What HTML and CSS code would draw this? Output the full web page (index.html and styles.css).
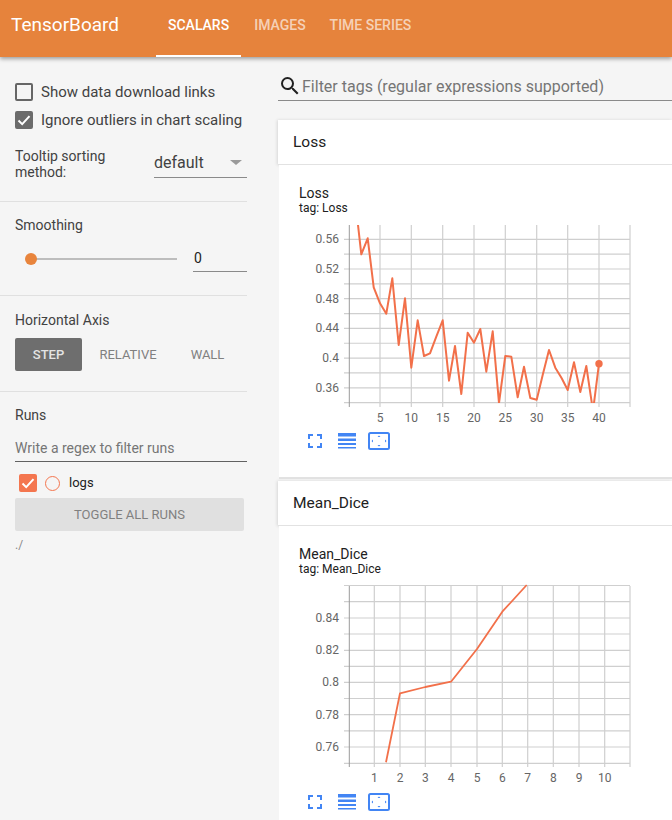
FILE: index.html
```html
<!DOCTYPE html>
<html lang="en">
<head>
    <meta charset="UTF-8">
    <meta name="viewport" content="width=device-width, initial-scale=1.0">
    <title>TensorBoard</title>
    <link rel="stylesheet" href="styles.css">
</head>
<body>

    <header class="topbar">
        <div class="brand">TensorBoard</div>
        <nav class="tabs">
            <a class="tab active">SCALARS</a>
            <a class="tab">IMAGES</a>
            <a class="tab">TIME SERIES</a>
        </nav>
    </header>

    <div class="page">
        <aside class="sidebar">
            <section class="side-section options">
                <label class="check-row">
                    <span class="box"></span>
                    <span>Show data download links</span>
                </label>
                <label class="check-row">
                    <span class="box checked">
                        <svg viewBox="0 0 18 18" width="18" height="18"><path d="M3.5 9.5l3.7 3.6 7.3-8" class="tick"/></svg>
                    </span>
                    <span>Ignore outliers in chart scaling</span>
                </label>
                <div class="sort-row">
                    <div class="sort-label">Tooltip sorting method:</div>
                    <div class="select">
                        <span>default</span>
                        <span class="caret"></span>
                    </div>
                </div>
            </section>

            <section class="side-section smoothing">
                <div class="side-title">Smoothing</div>
                <div class="slider-row">
                    <div class="slider"><span class="knob"></span></div>
                    <div class="slider-value">0</div>
                </div>
            </section>

            <section class="side-section axis">
                <div class="side-title">Horizontal Axis</div>
                <div class="axis-buttons">
                    <span class="axis-btn selected">STEP</span>
                    <span class="axis-btn">RELATIVE</span>
                    <span class="axis-btn">WALL</span>
                </div>
            </section>

            <section class="side-section runs">
                <div class="side-title">Runs</div>
                <div class="runs-filter">Write a regex to filter runs</div>
                <div class="run-row">
                    <span class="box run-box">
                        <svg viewBox="0 0 18 18" width="18" height="18"><path d="M3.5 9.5l3.7 3.6 7.3-8" class="tick"/></svg>
                    </span>
                    <span class="run-dot"></span>
                    <span class="run-name">logs</span>
                </div>
                <div class="toggle-runs">TOGGLE ALL RUNS</div>
                <div class="run-dir">./</div>
            </section>
        </aside>

        <main class="content">
            <div class="tag-filter">
                <svg class="search-icon" viewBox="0 0 24 24" width="24" height="24"><path d="M15.5 14h-.79l-.28-.27A6.47 6.47 0 0 0 16 9.5 6.5 6.5 0 1 0 9.5 16c1.61 0 3.09-.59 4.23-1.57l.27.28v.79l5 4.99L20.49 19l-4.99-5zm-6 0C7.01 14 5 11.99 5 9.5S7.01 5 9.5 5 14 7.01 14 9.5 11.99 14 9.5 14z"/></svg>
                <span>Filter tags (regular expressions supported)</span>
            </div>

            <section class="card">
                <h3 class="card-head">Loss</h3>
                <div class="card-body">
                    <div class="chart-title">Loss</div>
                    <div class="chart-tag">tag: Loss</div>
                    <svg class="chart" viewBox="299 220 335 205" width="335" height="205">
                        <path class="grid" d="M344 239.3H630M344 254.15H630M344 269H630M344 283.85H630M344 298.7H630M344 313.55H630M344 328.4H630M344 343.25H630M344 358.1H630M344 372.95H630M344 387.8H630M344 402.65H630"/>
                        <path class="grid" d="M380 225V407M411.3 225V407M442.7 225V407M474 225V407M505.3 225V407M536.7 225V407M567.7 225V407M599 225V407M630 225V407"/>
                        <path class="axis-line" d="M349.3 225V407"/>
                        <g class="y-labels">
                            <text x="339" y="243.3">0.56</text>
                            <text x="339" y="273">0.52</text>
                            <text x="339" y="302.7">0.48</text>
                            <text x="339" y="332.4">0.44</text>
                            <text x="339" y="362.1">0.4</text>
                            <text x="339" y="391.8">0.36</text>
                        </g>
                        <g class="x-labels">
                            <text x="380" y="422">5</text>
                            <text x="411.3" y="422">10</text>
                            <text x="442.7" y="422">15</text>
                            <text x="474" y="422">20</text>
                            <text x="505.3" y="422">25</text>
                            <text x="536.7" y="422">30</text>
                            <text x="567.7" y="422">35</text>
                            <text x="599" y="422">40</text>
                        </g>
                        <clipPath id="lossClip"><rect x="349" y="225" width="281" height="178"/></clipPath>
                        <polyline class="series" clip-path="url(#lossClip)" points="358,225 361.3,254.3 367.7,238.3 373.7,287.3 380,303.3 386.3,313.7 392.3,278.3 398.7,345 405,298.3 411.3,367.7 417.7,320.3 424,356 430,353.3 436.3,336.7 442.7,320.3 449,380.7 455,346 461.3,394 467.7,332.7 474,342.7 480.3,329 486.3,371.7 492.7,331.3 499,403 505.3,356 511.3,356.7 517.7,397.3 524,366.7 530.3,398 536.7,399.7 542.7,375 549,350 555.3,367.7 561.7,378.3 567.7,390 574,362.3 580.3,392 586.3,366 593,411 599,363.7"/>
                        <circle class="series-dot" cx="599" cy="363.7" r="3.7"/>
                    </svg>
                    <div class="chart-tools">
                        <svg class="tool-fit" viewBox="0 0 14 14" width="14" height="14"><path class="tool-fill" d="M0 0h5v2H2v3H0zM9 0h5v5h-2V2H9zM0 9h2v3h3v2H0zM12 9h2v5H9v-2h3z"/></svg>
                        <svg class="tool-lines" viewBox="0 0 18 16" width="18" height="16"><path class="tool-fill" d="M0 0h18v3.500H0zM0 5.500h18v2.500H0zM0 10h18v2H0zM0 14h18v1.500H0z"/></svg>
                        <svg class="tool-box" viewBox="0 0 22 18" width="22" height="18"><rect class="tool-stroke" x="1" y="1" width="20" height="16" rx="1.500"/><path class="tool-fill" d="M9.500 5L11 3.500 12.500 5zM9.500 13l1.500 1.500 1.500-1.500zM5 7.500L3.500 9 5 10.500zM17 7.500L18.500 9 17 10.500z"/></svg>
                    </div>
                </div>
            </section>

            <section class="card">
                <h3 class="card-head">Mean_Dice</h3>
                <div class="card-body">
                    <div class="chart-title">Mean_Dice</div>
                    <div class="chart-tag">tag: Mean_Dice</div>
                    <svg class="chart" viewBox="299 581 335 205" width="335" height="205">
                        <path class="grid" d="M344 585.5H630M344 601.7H630M344 618H630M344 634H630M344 650.3H630M344 666.3H630M344 682.3H630M344 698.5H630M344 714.7H630M344 730.8H630M344 747H630M344 763.3H630"/>
                        <path class="grid" d="M374.3 586V767M400 586V767M425.3 586V767M451 586V767M477 586V767M502.3 586V767M527.7 586V767M553.3 586V767M579 586V767M604.7 586V767M630 586V767"/>
                        <path class="axis-line" d="M349.3 586V767"/>
                        <g class="y-labels">
                            <text x="339" y="622">0.84</text>
                            <text x="339" y="654.3">0.82</text>
                            <text x="339" y="686.3">0.8</text>
                            <text x="339" y="718.7">0.78</text>
                            <text x="339" y="751">0.76</text>
                        </g>
                        <g class="x-labels">
                            <text x="374.3" y="782">1</text>
                            <text x="400" y="782">2</text>
                            <text x="425.3" y="782">3</text>
                            <text x="451" y="782">4</text>
                            <text x="477" y="782">5</text>
                            <text x="502.3" y="782">6</text>
                            <text x="527.7" y="782">7</text>
                            <text x="553.3" y="782">8</text>
                            <text x="579" y="782">9</text>
                            <text x="604.7" y="782">10</text>
                        </g>
                        <polyline class="series thin" points="386,762.3 400,693.3 425.3,687 451,681.7 477,649 502.3,611.7 526.7,585"/>
                    </svg>
                    <div class="chart-tools">
                        <svg class="tool-fit" viewBox="0 0 14 14" width="14" height="14"><path class="tool-fill" d="M0 0h5v2H2v3H0zM9 0h5v5h-2V2H9zM0 9h2v3h3v2H0zM12 9h2v5H9v-2h3z"/></svg>
                        <svg class="tool-lines" viewBox="0 0 18 16" width="18" height="16"><path class="tool-fill" d="M0 0h18v3.500H0zM0 5.500h18v2.500H0zM0 10h18v2H0zM0 14h18v1.500H0z"/></svg>
                        <svg class="tool-box" viewBox="0 0 22 18" width="22" height="18"><rect class="tool-stroke" x="1" y="1" width="20" height="16" rx="1.500"/><path class="tool-fill" d="M9.500 5L11 3.500 12.500 5zM9.500 13l1.500 1.500 1.500-1.500zM5 7.500L3.500 9 5 10.500zM17 7.500L18.500 9 17 10.500z"/></svg>
                    </div>
                </div>
            </section>
        </main>
    </div>

</body>
</html>
```

FILE: styles.css
```css
html, body {
    height: 100%;
}
body {
    font-family: Roboto, "Liberation Sans", sans-serif;
    margin: 0;
    padding: 0;
    background-color: #f5f5f5;
    color: #424242;
    overflow: hidden;
}

/* top bar */
.topbar {
    display: flex;
    height: 57px;
    background-color: #e6833c;
    box-shadow: 0 2px 4px rgba(0, 0, 0, 0.35);
    position: relative;
    z-index: 2;
}
.brand {
    width: 145px;
    padding: 13px 0 0 11px;
    font-size: 19px;
    line-height: 24px;
    color: #fff;
}
.tabs {
    display: flex;
}
.tab {
    padding: 17px 12px 0;
    font-size: 14px;
    line-height: 16px;
    font-weight: 500;
    color: rgba(255, 255, 255, 0.65);
    box-sizing: border-box;
}
.tab + .tab {
    margin-left: 1px;
    margin-right: -1px;
}
.tab.active {
    color: #fff;
    border-bottom: 2px solid #fff;
}

.page {
    display: flex;
    align-items: flex-start;
}

/* sidebar */
.sidebar {
    flex: 0 0 247px;
    margin-right: 31px;
}
.side-section {
    padding-left: 15px;
    border-bottom: 1px solid #e0e0e0;
    box-sizing: border-box;
}
.options {
    height: 145px;
    padding-top: 26px;
}
.check-row {
    display: flex;
    align-items: center;
    gap: 8px;
    height: 18px;
    margin-bottom: 10px;
    font-size: 15px;
    color: #424242;
}
.box {
    flex: none;
    width: 18px;
    height: 18px;
    border: 2px solid #666;
    border-radius: 2px;
    box-sizing: border-box;
}
.box.checked {
    background-color: #6b6b6b;
    border-color: #6b6b6b;
}
.box svg {
    display: block;
    margin: -2px;
}
.tick {
    fill: none;
    stroke: #fff;
    stroke-width: 2;
}
.sort-row {
    display: flex;
    margin-top: 19px;
}
.sort-label {
    width: 139px;
    padding-right: 30px;
    font-size: 14px;
    line-height: 16px;
    box-sizing: border-box;
}
.select {
    display: flex;
    justify-content: space-between;
    align-items: center;
    flex: 1;
    height: 32px;
    margin-top: -2px;
    padding-top: 2px;
    font-size: 16px;
    border-bottom: 1px solid #8a8a8a;
    box-sizing: border-box;
}
.caret {
    margin-right: 5px;
    border-left: 6px solid transparent;
    border-right: 6px solid transparent;
    border-top: 5px solid #9a9a9a;
}
.side-title {
    font-size: 14px;
    line-height: 16px;
    color: #424242;
}
.smoothing {
    height: 94px;
    padding-top: 15px;
}
.slider-row {
    display: flex;
    align-items: flex-start;
    margin-top: 10px;
}
.slider {
    position: relative;
    width: 147px;
    height: 2px;
    margin: 15px 0 0 15px;
    background-color: #bdbdbd;
}
.knob {
    position: absolute;
    left: -5px;
    top: -5px;
    width: 12px;
    height: 12px;
    border-radius: 50%;
    background-color: #e8843c;
}
.slider-value {
    flex: 1;
    height: 29px;
    margin-left: 16px;
    padding: 7px 0 0 1px;
    font-size: 14px;
    line-height: 16px;
    color: #212121;
    border-bottom: 1px solid #8a8a8a;
    box-sizing: border-box;
}
.axis {
    height: 96px;
    padding-top: 16px;
}
.axis-buttons {
    display: flex;
    gap: 12.5px;
    margin-top: 10px;
}
.axis-btn {
    width: 67px;
    height: 33px;
    font-size: 13px;
    line-height: 33px;
    text-align: center;
    color: #808080;
    border-radius: 2px;
}
.axis-btn.selected {
    font-weight: 500;
    color: #e4e4e4;
    background-color: #6e6e6e;
}
.runs {
    padding-top: 15px;
    border-bottom: 0;
}
.runs-filter {
    height: 39px;
    padding-top: 17px;
    font-size: 14px;
    line-height: 16px;
    color: #757575;
    border-bottom: 1px solid #616161;
    box-sizing: border-box;
}
.run-row {
    display: flex;
    align-items: center;
    height: 18px;
    margin-top: 12px;
    padding-left: 4px;
}
.run-box {
    background-color: #f4764f;
    border-color: #f4764f;
}
.run-dot {
    width: 15px;
    height: 15px;
    margin-left: 8px;
    border: 1.5px solid #f4764f;
    border-radius: 50%;
    box-sizing: border-box;
}
.run-name {
    margin: 0 0 0 9px;
    font-size: 13px;
    line-height: 14px;
    color: #212121;
}
.toggle-runs {
    width: 229px;
    height: 33px;
    margin-top: 6px;
    font-size: 13px;
    line-height: 33px;
    text-align: center;
    color: #808080;
    background-color: #e0e0e0;
    border-radius: 2px;
}
.run-dir {
    margin-top: 7px;
    font-size: 12px;
    line-height: 14px;
    color: #8a8a8a;
}

/* main column */
.content {
    flex: 1;
    min-width: 0;
    padding-top: 16px;
}
.tag-filter {
    display: flex;
    align-items: center;
    height: 28px;
    padding-bottom: 1px;
    font-size: 16px;
    color: #757575;
    border-bottom: 1px solid #8a8a8a;
    white-space: nowrap;
    box-sizing: border-box;
}
.search-icon {
    flex: none;
    fill: #212121;
}
.card {
    margin-top: 19px;
}
.card + .card {
    margin-top: 2px;
}
.card-head {
    height: 45px;
    margin: 0;
    padding-left: 15px;
    font-size: 15.5px;
    font-weight: 400;
    line-height: 44px;
    color: #212121;
    background: #fff;
    border-bottom: 1px solid #e2e2e2;
    box-shadow: -1px 0 3px rgba(0, 0, 0, 0.12);
    box-sizing: border-box;
}
.card-body {
    height: 314px;
    margin-left: 1px;
    padding: 20px 0 0 20px;
    background: #fff;
    border-bottom: 2px solid #e2e2e2;
    box-sizing: border-box;
}
.chart-title {
    font-size: 14px;
    line-height: 16px;
    color: #212121;
}
.chart-tag {
    font-size: 12px;
    line-height: 14px;
    color: #212121;
}
.chart {
    display: block;
    margin-top: 5px;
}
.grid {
    fill: none;
    stroke: #cfcfcf;
    stroke-width: 1.2;
}
.axis-line {
    fill: none;
    stroke: #9a9a9a;
    stroke-width: 1;
}
.y-labels text, .x-labels text {
    font-size: 12px;
    fill: #666;
}
.y-labels text {
    text-anchor: end;
}
.x-labels text {
    text-anchor: middle;
}
.series {
    fill: none;
    stroke: #f2704a;
    stroke-width: 2;
    stroke-linejoin: round;
}
.series.thin {
    stroke-width: 1.8;
}
.series-dot {
    fill: #f2704a;
}
.chart-tools {
    display: flex;
    align-items: center;
    height: 18px;
    margin-top: 7px;
    padding-left: 9px;
}
.tool-fill {
    fill: #4285f4;
}
.tool-stroke {
    fill: none;
    stroke: #4285f4;
    stroke-width: 2;
}
.tool-lines {
    margin-left: 16px;
}
.tool-box {
    margin-left: 12px;
}
```
